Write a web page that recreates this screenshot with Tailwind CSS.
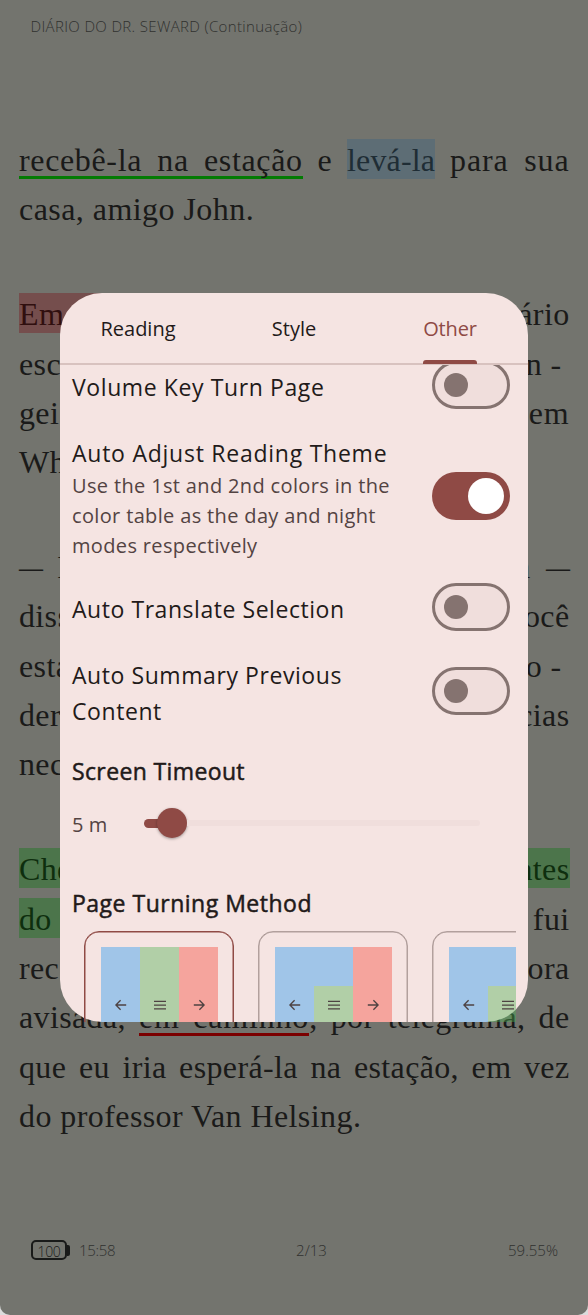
<!DOCTYPE html>
<html lang="pt">
<head>
<meta charset="utf-8">
<title>Reader settings</title>
<script src="https://cdn.jsdelivr.net/npm/@tailwindcss/browser@4"></script>
</head>
<body class="bg-[#dcdcdc]">
<svg class="hidden">
  <symbol id="left" viewBox="0 0 18 18"><path d="M14.2 9H4M8.6 4.2L3.9 9l4.7 4.8" fill="none" stroke="#4d4242" stroke-width="1.3"/></symbol>
  <symbol id="menu" viewBox="0 0 18 18"><path d="M3 5.3h12M3 9.1h12M3 12.9h12" fill="none" stroke="#4d4242" stroke-width="1.2"/></symbol>
  <symbol id="right" viewBox="0 0 18 18"><path d="M3.8 9H14M9.4 4.2L14.1 9l-4.7 4.8" fill="none" stroke="#4d4242" stroke-width="1.3"/></symbol>
</svg>
<div class="relative h-[1315px] w-[588px] overflow-hidden rounded-b-[10px] bg-[#73746e] font-['Open_Sans',sans-serif]">

  <!-- Book page -->
  <div class="flex h-full flex-col">
    <header class="h-[136px] pl-[30.5px] pt-[15px] text-[15px] leading-[22px] tracking-[0.35px] font-light text-[#30312e]">DIÁRIO DO DR. SEWARD (Continuação)</header>
    <main class="ml-[19px] w-[550.5px] grow font-['Liberation_Serif',serif] text-[32px] leading-[49.35px] tracking-[0.36px] text-[#1a1a19]">
      <section class="mb-[55.5px]">
        <p class="[text-align-last:justify]"><span class="pt-[3px] pb-px tracking-[0.65px] shadow-[inset_0_-3px_0_#037b03]">recebê-la na estação</span> e <span class="bg-[#5d6d75] pt-[3px] pb-px tracking-[0.15px] text-[#1f2d35]">levá-la</span> <span class="tracking-[0.9px]">para sua</span></p>
        <p class="tracking-[0.45px]">casa, amigo John.</p>
      </section>
      <section class="mb-[55.5px]">
        <p class="flex justify-between"><span><span class="bg-[#754e4d] pt-[3px] pr-[100px] pb-px text-[#300f0f]">Em</span></span><span>ário</span></p>
        <p class="flex justify-between"><span>esc</span><span class="pr-[8px]">n -</span></p>
        <p class="flex justify-between"><span>gei</span><span class="tracking-[0.8px]">em</span></p>
        <p>Wh</p>
      </section>
      <section class="mb-[55.5px]">
        <p class="flex justify-between"><span class="flex gap-[14px]"><span class="inline-block w-[24px] origin-left scale-x-75">—</span><span>I</span></span><span class="flex gap-[15px]"><span>n</span><span class="inline-block w-[24px] origin-left scale-x-75">—</span></span></p>
        <p class="flex justify-between"><span>diss</span><span>ocê</span></p>
        <p class="flex justify-between"><span>esta</span><span class="pr-[8px]">o -</span></p>
        <p class="flex justify-between"><span>der</span><span>cias</span></p>
        <p>nec</p>
      </section>
      <section>
        <p class="flex justify-between"><span><span class="bg-[#4c754b] pt-[3px] pb-px text-[#0e2e0e]">Che</span></span><span><span class="bg-[#4c754b] pt-[3px] pb-px text-[#0e2e0e]">ntes</span></span></p>
        <p class="flex justify-between"><span><span class="bg-[#4c754b] pt-[3px] pr-[14px] pb-px text-[#0e2e0e]">do</span></span><span>fui</span></p>
        <p class="flex justify-between"><span>rec</span><span>ora</span></p>
        <p class="[text-align-last:justify]">avisada, <span class="pt-[3px] pb-px tracking-[0.8px] shadow-[inset_0_-3px_0_#7b0000]">em caminho</span>, por telegrama, de</p>
        <p class="[text-align-last:justify]">que eu iria esperá-la na estação, em vez</p>
        <p class="tracking-[0.42px]">do professor Van Helsing.</p>
      </section>
    </main>
    <footer class="grid h-[76px] grid-cols-3 pl-[31px] pr-[30px] text-[15px] leading-[22px] font-light text-[#30312e]">
      <div class="flex items-start">
        <div class="flex items-center pt-px">
          <span class="flex h-[20px] w-[36px] items-center justify-center rounded-[5px] border-[2px] border-[#191a19] pt-[3px] text-[14px] tracking-[-0.3px] text-[#191a19]">100</span>
          <span class="h-[11px] w-[3px] rounded-r-[2px] bg-[#191a19]"></span>
        </div>
        <span class="pl-[9px] tracking-[-0.3px]">15:58</span>
      </div>
      <span class="pl-[34px] text-center">2/13</span>
      <span class="text-right">59.55%</span>
    </footer>
  </div>

  <!-- Settings dialog -->
  <div class="absolute left-[60px] top-[293px] flex h-[729px] w-[468px] flex-col rounded-[42px] bg-[#f5e4e2] text-[#221a19]">
    <nav class="grid h-[72px] shrink-0 grid-cols-3 border-b-2 border-[#d8c2bf] text-[20px] leading-[72px]">
      <span class="text-center">Reading</span>
      <span class="text-center">Style</span>
      <span class="flex h-[70px] flex-col items-center text-[#8f4a45]"><span class="h-[67px] tracking-[-0.15px]">Other</span><i class="h-[4px] w-[54px] shrink-0 rounded-t-[3px] bg-[#8f4a45]"></i></span>
    </nav>
    <div class="flex grow flex-col overflow-hidden px-[12px] text-[23px] leading-[36px]">
      <div class="-mt-[4px] flex shrink-0 flex-col gap-[24px] pr-[6px]">
        <div class="flex h-[48px] items-center justify-between">
          <span class="translate-y-[2px] tracking-[0.6px]">Volume Key Turn Page</span>
          <span class="flex h-[48px] w-[78px] items-center rounded-full border-[3px] border-[#857370] bg-[#f0dedc] pl-[9px]"><i class="size-[24px] rounded-full bg-[#857370]"></i></span>
        </div>
        <div class="flex h-[126px] items-center justify-between">
          <div class="translate-y-[2px]">
            <p class="tracking-[0.75px]">Auto Adjust Reading Theme</p>
            <p class="text-[20px] leading-[30px] tracking-[0.35px] text-[#534342]">Use the 1st and 2nd colors in the<br>color table as the day and night<br>modes respectively</p>
          </div>
          <span class="flex h-[48px] w-[78px] items-center justify-end rounded-full bg-[#8f4a45] pr-[6px]"><i class="size-[36px] rounded-full bg-white"></i></span>
        </div>
        <div class="flex h-[48px] items-center justify-between">
          <span class="translate-y-[2px] tracking-[0.55px]">Auto Translate Selection</span>
          <span class="flex h-[48px] w-[78px] items-center rounded-full border-[3px] border-[#857370] bg-[#f0dedc] pl-[9px]"><i class="size-[24px] rounded-full bg-[#857370]"></i></span>
        </div>
        <div class="flex h-[72px] items-center justify-between">
          <span class="translate-y-[2px] tracking-[0.57px]">Auto Summary Previous<br>Content</span>
          <span class="flex h-[48px] w-[78px] items-center rounded-full border-[3px] border-[#857370] bg-[#f0dedc] pl-[9px]"><i class="size-[24px] rounded-full bg-[#857370]"></i></span>
        </div>
      </div>
      <h2 class="mt-[26px] shrink-0 tracking-[0.37px] [-webkit-text-stroke:0.5px_#221a19]">Screen Timeout</h2>
      <div class="flex h-[68px] shrink-0 items-center text-[20px] text-[#534342]">
        <span class="w-[72px] translate-y-[2px]">5 m</span>
        <div class="flex w-[336px] items-center">
          <i class="h-[9px] w-[14px] rounded-l-full bg-[#8f4a45]"></i>
          <i class="-ml-px size-[30px] rounded-full bg-[#8f4a45] shadow-[0_1px_3px_rgba(0,0,0,0.35)]"></i>
          <i class="h-[6px] grow rounded-r-full bg-[#f0dedc]"></i>
        </div>
      </div>
      <h2 class="mt-[28px] shrink-0 tracking-[0.5px] [-webkit-text-stroke:0.5px_#221a19]">Page Turning Method</h2>
      <div class="mt-[10px] flex h-[91px] shrink-0 gap-[24px] overflow-hidden pl-[12px]">
        <div class="h-[150px] w-[150px] shrink-0 rounded-[15px] border border-[#8f4a45] pl-[16px] pt-[15px] shadow-[inset_0_0_0_0.5px_#8f4a45]">
          <div class="grid h-[117px] w-[117px] grid-cols-3">
            <div class="bg-[#2196f3]/40 pl-[10.5px] pt-[49px]"><svg class="size-[18px]"><use href="#left"/></svg></div>
            <div class="bg-[#4caf50]/40 pl-[10.5px] pt-[49px]"><svg class="size-[18px]"><use href="#menu"/></svg></div>
            <div class="bg-[#f44336]/40 pl-[10.5px] pt-[49px]"><svg class="size-[18px]"><use href="#right"/></svg></div>
          </div>
        </div>
        <div class="h-[150px] w-[150px] shrink-0 rounded-[15px] border border-[#857370]/60 pl-[16px] pt-[15px] shadow-[inset_0_0_0_0.5px_#85737099]">
          <div class="grid h-[117px] w-[117px] grid-cols-3 grid-rows-3">
            <div class="col-span-2 bg-[#2196f3]/40"></div>
            <div class="row-span-3 bg-[#f44336]/40 pl-[10.5px] pt-[49px]"><svg class="size-[18px]"><use href="#right"/></svg></div>
            <div class="row-span-2 bg-[#2196f3]/40 pl-[10.5px] pt-[10px]"><svg class="size-[18px]"><use href="#left"/></svg></div>
            <div class="row-span-2 bg-[#4caf50]/40 pl-[10.5px] pt-[10px]"><svg class="size-[18px]"><use href="#menu"/></svg></div>
          </div>
        </div>
        <div class="h-[150px] w-[150px] shrink-0 rounded-[15px] border border-[#857370]/60 pl-[16px] pt-[15px] shadow-[inset_0_0_0_0.5px_#85737099]">
          <div class="grid h-[117px] w-[117px] grid-cols-3 grid-rows-3">
            <div class="col-span-3 bg-[#2196f3]/40"></div>
            <div class="row-span-2 bg-[#2196f3]/40 pl-[10.5px] pt-[10px]"><svg class="size-[18px]"><use href="#left"/></svg></div>
            <div class="bg-[#4caf50]/40 pl-[10.5px] pt-[10px]"><svg class="size-[18px]"><use href="#menu"/></svg></div>
            <div class="row-span-2 bg-[#f44336]/40"></div>
          </div>
        </div>
      </div>
    </div>
  </div>
</div>
</body>
</html>
